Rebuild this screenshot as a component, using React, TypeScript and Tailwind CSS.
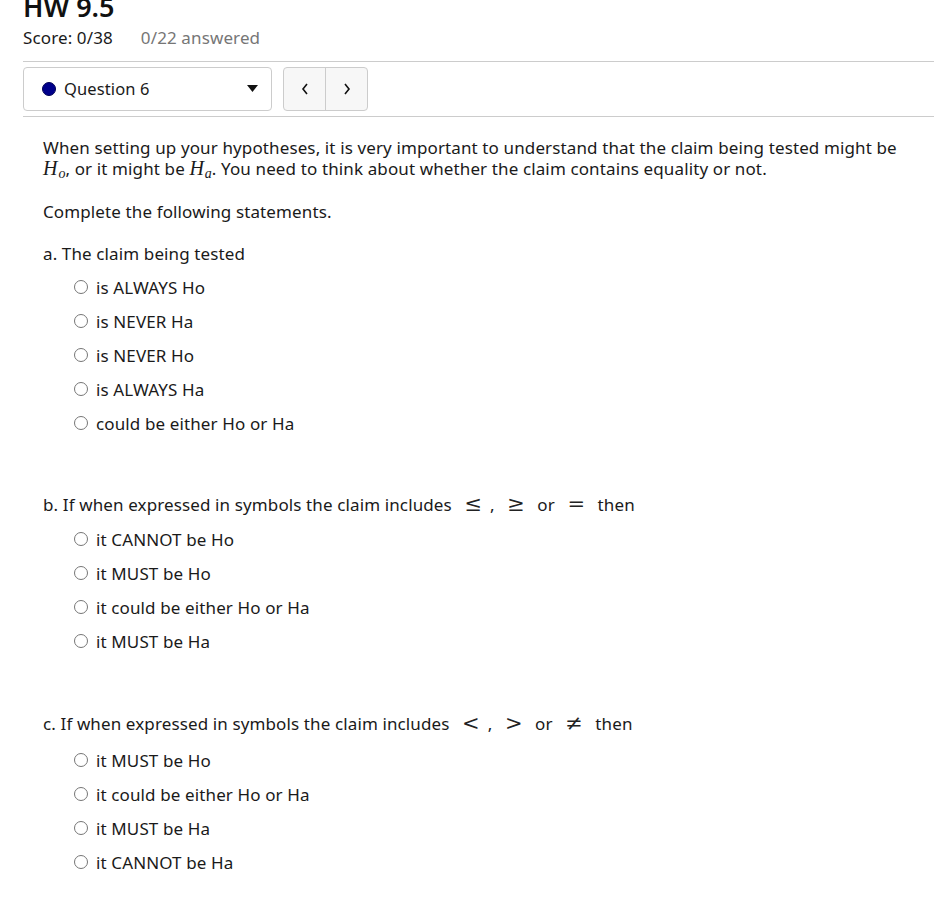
import React from "react";

const font = { fontFamily: '"Noto Sans", "DejaVu Sans", sans-serif', letterSpacing: "0.12px" };

function Radio() {
  return (
    <span className="inline-block w-[14px] h-[14px] rounded-full border border-[#767676] bg-white shrink-0" />
  );
}

function Option({ text }: { text: string }) {
  return (
    <div className="h-[34px] flex items-center pl-[31px] gap-[8px]">
      <Radio />
      <span>{text}</span>
    </div>
  );
}

function MathH({ sub }: { sub: string }) {
  return (
    <span
      className="italic text-[20px] leading-none tracking-normal"
      style={{ fontFamily: '"Liberation Serif", "DejaVu Serif", serif' }}
    >
      H<span className="relative top-[3px] text-[14px] leading-none ml-[1px]">{sub}</span>
    </span>
  );
}

function Sym({ c }: { c: string }) {
  return (
    <span
      className="text-[21px] leading-none text-[#222] px-[8px] tracking-normal"
      style={{ fontFamily: '"DejaVu Serif", "Liberation Serif", serif', fontWeight: 300 }}
    >
      {c}
    </span>
  );
}

export default function App() {
  return (
    <div className="bg-white min-h-[898px] w-[934px] overflow-hidden text-[#1a1a1a] text-[17px]" style={font}>
      <div className="pl-[23px]">
        <h1 className="text-[27px] leading-none font-semibold mt-[-7px] text-[#111] tracking-normal">HW 9.5</h1>
        <div className="mt-[7px] h-[22px] flex items-center leading-[22px]">
          <span>Score: 0/38</span>
          <span className="ml-[28px] text-[#767676]">0/22 answered</span>
        </div>
        <div className="mt-[12px] border-t border-[#cccccc]" />
        <div className="mt-[5px] flex gap-[11px] h-[44px]">
          <div className="w-[249px] h-[44px] border border-[#cccccc] rounded-[4px] flex items-center pl-[18px] pr-[12px] text-[16.5px]">
            <span className="w-[14px] h-[14px] rounded-full bg-[#00008b] border border-[#000055]" />
            <span className="ml-[8px] flex-1">Question 6</span>
            <svg width="11" height="8" viewBox="0 0 11 8" className="mr-[1px]">
              <path d="M0 0 H11 L5.5 7 Z" fill="#111" />
            </svg>
          </div>
          <div className="flex h-[44px] border border-[#cccccc] rounded-[4px] bg-[#f7f7f7]">
            <div className="w-[42px] flex items-center justify-center border-r border-[#cccccc]">
              <svg width="8" height="12" viewBox="0 0 8 12">
                <path d="M6 1 L2 6 L6 11" stroke="#111" strokeWidth="1.6" fill="none" />
              </svg>
            </div>
            <div className="w-[41px] flex items-center justify-center">
              <svg width="8" height="12" viewBox="0 0 8 12">
                <path d="M2 1 L6 6 L2 11" stroke="#111" strokeWidth="1.6" fill="none" />
              </svg>
            </div>
          </div>
        </div>
        <div className="mt-[5px] border-t border-[#cccccc]" />
      </div>

      <div className="pl-[43px] pr-[16px] leading-[21px]">
        <p className="mt-[20px]">
          When setting up your hypotheses, it is very important to understand that the claim being tested might be
          <br />
          <MathH sub="o" />, or it might be <MathH sub="a" />. You need to think about whether the claim contains equality or not.
        </p>
        <p className="mt-[22px]">Complete the following statements.</p>

        <p className="mt-[21px]">a. The claim being tested</p>
        <div className="mt-[6px]">
          <Option text="is ALWAYS Ho" />
          <Option text="is NEVER Ha" />
          <Option text="is NEVER Ho" />
          <Option text="is ALWAYS Ha" />
          <Option text="could be either Ho or Ha" />
        </div>

        <p className="mt-[53px] h-[22px] flex items-center whitespace-pre">
          <span>b. If when expressed in symbols the claim includes </span>
          <Sym c="≤" />
          <span>, </span>
          <Sym c="≥" />
          <span> or </span>
          <Sym c="=" />
          <span> then</span>
        </p>
        <div className="mt-[7px]">
          <Option text="it CANNOT be Ho" />
          <Option text="it MUST be Ho" />
          <Option text="it could be either Ho or Ha" />
          <Option text="it MUST be Ha" />
        </div>

        <p className="mt-[54px] h-[22px] flex items-center whitespace-pre">
          <span>c. If when expressed in symbols the claim includes </span>
          <Sym c="<" />
          <span>, </span>
          <Sym c=">" />
          <span> or </span>
          <Sym c="≠" />
          <span> then</span>
        </p>
        <div className="mt-[9px]">
          <Option text="it MUST be Ho" />
          <Option text="it could be either Ho or Ha" />
          <Option text="it MUST be Ha" />
          <Option text="it CANNOT be Ha" />
        </div>
      </div>
    </div>
  );
}
